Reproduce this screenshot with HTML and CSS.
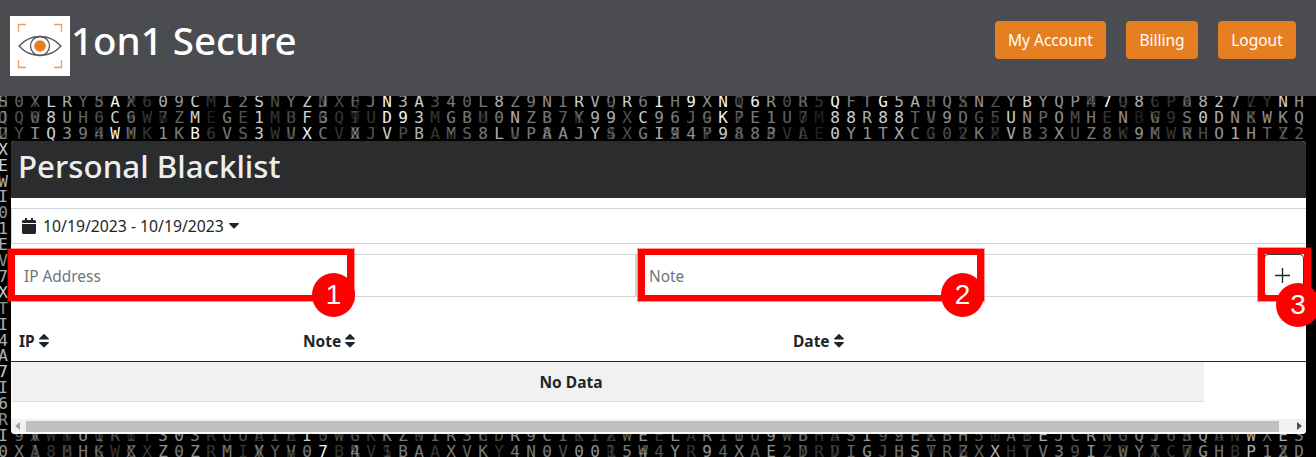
FILE: index.html
```html
<!DOCTYPE html>
<html lang="en">
<head>
<meta charset="utf-8">
<title>Personal Blacklist</title>
<link rel="stylesheet" href="styles.css">
</head>
<body>
<div class="matrix" id="matrix" aria-hidden="true"></div>
<header class="topbar">
  <div class="brand">
    <span class="logo">
      <svg width="60" height="60" viewBox="0 0 60 60" fill="none">
        <path d="M8.5 16V8.500H16M44 8.500H51.500V16M8.500 44V51.500H16M44 51.500H51.500V44" stroke="#ee9a5e" stroke-width="1.300"/>
        <path d="M9 30C15 23.500 22 20.500 30 20.500S45 23.500 51 30C45 36.500 38 39.500 30 39.500S15 36.500 9 30Z" stroke="#55565a" stroke-width="1.300"/>
        <circle cx="30" cy="30" r="9.500" stroke="#55565a" stroke-width="1.300"/>
        <circle cx="30" cy="30" r="5.800" fill="#e67e22"/>
      </svg>
    </span>
    <span class="brand-name">1on1 Secure</span>
  </div>
  <nav class="nav">
    <a class="nav-btn nav-account">My Account</a>
    <a class="nav-btn nav-billing">Billing</a>
    <a class="nav-btn nav-logout">Logout</a>
  </nav>
</header>
<main class="page">
  <section class="card">
    <h1 class="card-title">Personal Blacklist</h1>
    <div class="card-body">
      <div class="date-row">
        <svg class="cal" width="14" height="16" viewBox="0 0 14 16"><path fill="#212529" d="M3 0h2v2h4V0h2v2h1.500C13.300 2 14 2.700 14 3.500V5H0V3.500C0 2.700 .7 2 1.500 2H3zM0 6h14v8.500c0 .8-.7 1.500-1.500 1.500h-11C.7 16 0 15.300 0 14.500z"/></svg>
        <span>10/19/2023 - 10/19/2023</span>
        <svg class="caret" width="10" height="6" viewBox="0 0 10 6"><path fill="#212529" d="M.6 0h8.800c.5 0 .8.600.4 1L5.400 5.600c-.2.200-.6.200-.8 0L.2 1C-.2.600.1 0 .6 0z"/></svg>
      </div>
      <div class="filter-row">
        <div class="field field-ip">
          <input class="input" placeholder="IP Address">
          <span class="mark"></span>
          <span class="badge">1</span>
        </div>
        <div class="field field-note">
          <input class="input" placeholder="Note">
          <span class="mark mark-note"></span>
          <span class="badge badge-note">2</span>
        </div>
        <div class="add">
          <button class="add-btn" type="button" aria-label="Add">
            <svg class="plus" width="15" height="15" viewBox="0 0 15 15"><path d="M7.500 0V15M0 7.500H15" stroke="#212529" stroke-width="1.300"/></svg>
          </button>
          <span class="mark mark-add"></span>
          <span class="badge badge-add">3</span>
        </div>
      </div>
      <div class="table-wrap">
        <div class="thead">
          <div class="th th-ip">IP <svg class="sort" width="10" height="16" viewBox="0 0 10 16"><path fill="#212529" d="M.7 6.500h8.600c.6 0 .9-.7.500-1.100L5.500 1.200c-.3-.3-.7-.3-1 0L.2 5.400c-.4.400-.1 1.100.5 1.100zM9.300 9H.7c-.6 0-.9.700-.5 1.100l4.300 4.200c.3.300.7.300 1 0l4.300-4.200c.4-.4.100-1.100-.5-1.100z"/></svg></div>
          <div class="th th-note">Note <svg class="sort" width="10" height="16" viewBox="0 0 10 16"><path fill="#212529" d="M.7 6.500h8.600c.6 0 .9-.7.500-1.100L5.500 1.200c-.3-.3-.7-.3-1 0L.2 5.400c-.4.400-.1 1.100.5 1.100zM9.300 9H.7c-.6 0-.9.700-.5 1.100l4.300 4.200c.3.300.7.300 1 0l4.300-4.200c.4-.4.100-1.100-.5-1.100z"/></svg></div>
          <div class="th th-date">Date <svg class="sort" width="10" height="16" viewBox="0 0 10 16"><path fill="#212529" d="M.7 6.500h8.600c.6 0 .9-.7.500-1.100L5.500 1.200c-.3-.3-.7-.3-1 0L.2 5.400c-.4.400-.1 1.100.5 1.100zM9.300 9H.7c-.6 0-.9.700-.5 1.100l4.300 4.200c.3.300.7.300 1 0l4.300-4.200c.4-.4.100-1.100-.5-1.100z"/></svg></div>
        </div>
        <div class="no-data">No Data</div>
      </div>
      <div class="scrollbar">
        <span class="arrow arrow-left"></span>
        <span class="thumb"></span>
        <span class="arrow arrow-right"></span>
      </div>
    </div>
  </section>
</main>
<script src="matrix.js"></script>
</body>
</html>
```
FILE: styles.css
```css
* { box-sizing: border-box; }
html, body { margin: 0; height: 457px; overflow: hidden; }
body { background: #000; font-family: "Noto Sans", "DejaVu Sans", sans-serif; font-size: 16px; color: #212529; position: relative; }

.matrix { position: absolute; left: -5px; top: 94px; width: 1340px; height: 368px; font: 16px/16px "DejaVu Sans Mono", monospace; color: #fff; overflow: hidden; }
.m-row { position: absolute; left: 0; height: 16px; white-space: nowrap; }
.m-cell { display: inline-block; width: 16px; text-align: center; }
.l0 { opacity: 0; } .l1 { opacity: .13; } .l2 { opacity: .2; } .l3 { opacity: .3; } .l4 { opacity: .38; }
.l5 { opacity: .47; } .l6 { opacity: .56; } .l7 { opacity: .68; } .l8 { opacity: .8; } .l9 { opacity: .95; }

.topbar { position: relative; height: 96px; background: #4b4c4f; display: flex; justify-content: space-between; align-items: flex-start; padding: 16px 20px 0 10px; }
.brand { display: flex; align-items: flex-start; height: 60px; }
.logo { width: 60px; height: 60px; background: #fff; display: block; }
.logo svg { display: block; }
.brand-name { color: #fff; font-size: 38.500px; font-weight: 500; line-height: 48px; margin-left: 1px; }
.nav { display: flex; gap: 20px; margin-top: 5px; }
.nav-btn { display: block; height: 38px; line-height: 38px; text-align: center; background: #e67e22; color: #fff; border-radius: 4px; font-size: 15.500px; }
.nav-account { width: 111px; }
.nav-billing { width: 72px; }
.nav-logout { width: 78px; }

.page { position: relative; padding: 45px 10px 0 11px; }
.card { height: 293px; background: #fff; border-radius: 4px; overflow: visible; display: flex; flex-direction: column; }
.card-title { margin: 0; height: 57px; background: #2b2c2e; color: #eee; font-size: 31.300px; font-weight: 500; line-height: 50px; padding-left: 7px; border-radius: 4px 4px 0 0; }
.card-body { flex: 1; display: flex; flex-direction: column; padding-top: 10px; }

.date-row { height: 36px; border: 1px solid #ced4da; border-right: 0; display: flex; align-items: center; padding-left: 10px; gap: 7px; font-size: 15.750px; }
.cal { display: block; }
.caret { margin-left: -2px; }

.filter-row { display: flex; margin-top: 10px; height: 43px; }
.field { position: relative; }
.field-ip { flex: 0 0 625px; }
.field-note { flex: 0 0 628px; }
.input { display: block; width: 100%; height: 43px; border: 1px solid #ced4da; padding: 2px 12px 0; font: inherit; font-size: 15.400px; color: #212529; background: #fff; outline: 0; }
.input::placeholder { color: #6c757d; opacity: 1; }
.add { position: relative; flex: 0 0 40px; }
.add-btn { display: flex; align-items: center; justify-content: center; width: 40px; height: 43px; padding: 0 3px 0 0; border: 1px solid #343a40; border-radius: 4px; background: #fff; }
.plus { display: block; }

.mark { position: absolute; left: -3px; top: -5px; width: 346px; height: 52px; border-style: solid; border-color: #f00; border-width: 6px 7px; box-shadow: 0 0 0 1px rgba(255, 0, 0, .4); pointer-events: none; }
.mark-note { left: 2px; }
.mark-add { left: -6px; top: -6px; width: 53px; height: 53px; }
.badge { position: absolute; left: 301px; top: 19px; width: 43px; height: 44px; border-radius: 50%; background: #f00; color: #fff; font: 28px/44px "Liberation Sans", Arial, sans-serif; text-align: center; }
.badge-note { left: 305px; }
.badge-add { left: 12px; top: 29px; width: 44px; }

.table-wrap { flex: 1; }
.thead { position: relative; height: 65px; border-bottom: 1px solid #212529; }
.th { position: absolute; top: 32px; height: 24px; line-height: 24px; font-weight: 700; font-size: 15.500px; display: flex; align-items: center; gap: 4px; white-space: nowrap; }
.th-ip { left: 8px; }
.th-note { left: 292px; }
.th-date { left: 782px; }
.sort { display: block; }
.no-data { width: 1192px; margin-left: 1px; height: 40px; line-height: 40px; background: #f1f1f1; border-bottom: 1px solid #dee2e6; font-weight: 700; font-size: 15.500px; text-align: center; padding-right: 74px; }

.scrollbar { position: relative; height: 15px; background: #f1f1f1; display: block; padding: 2px 27px 2px 15px; border-radius: 0 0 4px 4px; border-bottom: 2px solid #fff; }
.thumb { display: block; height: 11px; background: #c1c1c1; }
.arrow { position: absolute; top: 3px; width: 0; height: 0; border-style: solid; }
.arrow-left { left: 4px; border-width: 4.500px 5px 4.500px 0; border-color: transparent #a3a3a3 transparent transparent; }
.arrow-right { right: 4px; border-width: 4.500px 0 4.500px 5px; border-color: transparent transparent transparent #505050; }
```
FILE: matrix.js
```js
(function () {
  var root = document.getElementById('matrix');
  var rows = {
    0: ['S0XLRY5AX609CMI2SNYZJXFJN3A340L8Z9NIRVQR6' + 'IH9XNQ6R0R5QFTG5AHQSNZYBYQP47Q8CP08277YNH',
        '44387439327682558338433597835457556587385' + '95969396332955977353626866639271237872286'],
    1: ['JQ08UH6C6W7ZMEGE1MBF3QTUD93MGBU0NZB7Y99XC' + '96JGKPE1U7M88R88TV9DG5UNPOMHENBG9S0DNKWKQ',
        '43386428322481538228422299825525755437738' + '65439355421887884363328646352613258763666'.slice(0, 41)],
    2: ['UYIQ394WMK1KB6VS3WUXCVXJVPBAMS8LUPAAJYSXG' + 'I94P9883VAE0Y1TXCG02KPVB3XUZ8W9MWRHO1HTZ2',
        '43486539326592548239524383723457354668335' + '74638354221866675232517546354163233676434'],
    21: ['I9VWYU1RIY303RUUAIEI0WGKKZNIR3CDR9CIKIZWE' + 'ELARIUU9WBHASI99EZBH5MABEJCRNGQJ65QANWXE3',
         '74422633226652232328232255245433655423244' + '26253336332244335345314275444253336227475'.slice(0, 41)],
    22: ['0XA8MHKWXXZ0ZRMIXYV07B4V1BAAXVKY4N0V0015W' + '4YR94XAE2DRDIGJHSTRZXXHTV39IZWYTC7GHBP12D',
         '65322532426562524435924225525452555366254' + '36264536332246336343472255362353236327545'.slice(0, 41)]
  };
  var side = 'XEWI01EV7XTI4A7I6R'.split('');
  var sideLv = '887767767867778776'.split('');
  var sideR = 'EQ8HZUNTP3AKWBGJ7D'.split('');

  function cell(row, ch, lv) {
    var s = document.createElement('span');
    s.className = 'm-cell l' + lv;
    s.textContent = ch;
    row.appendChild(s);
  }
  function addRow(y, text, lv, x) {
    var r = document.createElement('div');
    r.className = 'm-row';
    r.style.top = y * 15.9 + 'px';
    r.style.left = (x || 0) + 'px';
    for (var i = 0; i < text.length; i++) cell(r, text[i], +lv[i] || 0);
    root.appendChild(r);
  }
  Object.keys(rows).forEach(function (y) {
    var t = rows[y][0], l = rows[y][1];
    addRow(+y, t, l);
    // The reference overlays a second, fainter letter in its dimmer cells.
    var ghost = t.split('').reverse().join('');
    var gl = '';
    for (var i = 0; i < t.length; i++) {
      var v = +l[i];
      gl += (v <= 4 && i % 2 === 0) ? Math.max(1, v - 1) : '0';
    }
    addRow(+y, ghost, gl);
  });
  side.forEach(function (c, i) {
    addRow(i + 3, c, sideLv[i]);
    addRow(i + 3, sideR[i], '2', 81 * 16);
  });
})();
```
